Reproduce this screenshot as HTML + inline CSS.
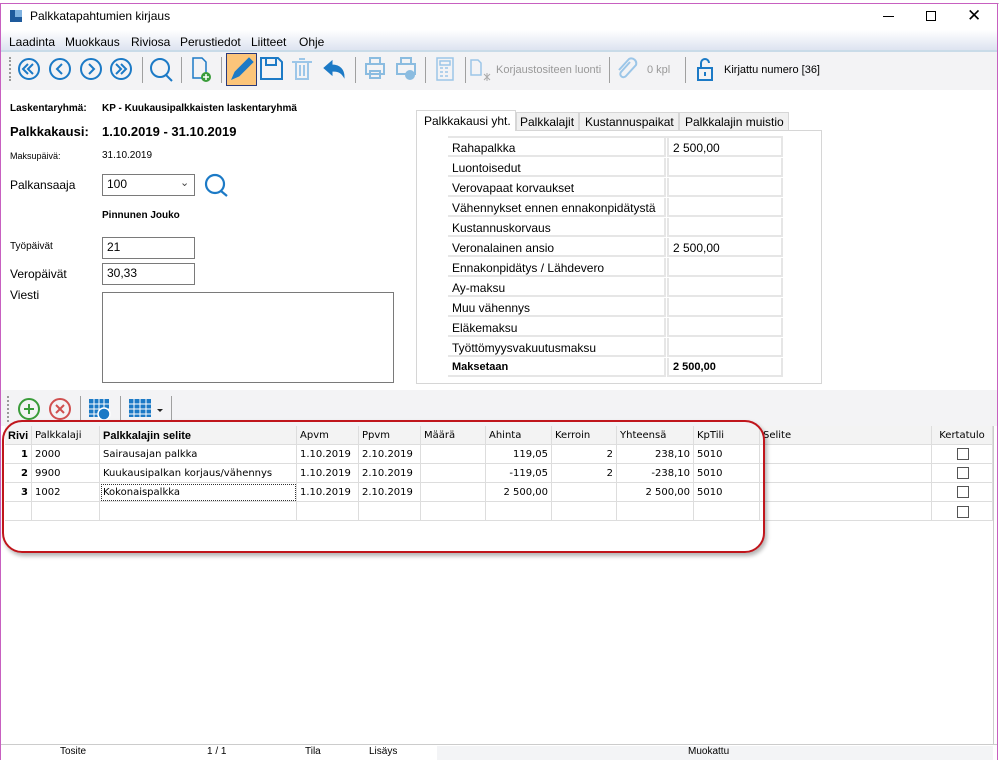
<!DOCTYPE html>
<html><head><meta charset="utf-8"><style>
*{box-sizing:border-box;margin:0;padding:0}
body{width:999px;height:760px;position:relative;overflow:hidden;background:#fff;font-family:"Liberation Sans",Arial,sans-serif;font-size:12px;color:#000}
.a{position:absolute}
.t{position:absolute;white-space:nowrap}
.ic{position:absolute}
.sep{position:absolute;width:1px;background:#a0a0a0}
.inp{position:absolute;border:1px solid #7a7a7a;background:#fff;font-size:12px;padding:2px 4px}
.rl{position:absolute;left:448px;width:218px;height:19px;border-bottom:2px solid #e6e6e6;border-right:2px solid #e6e6e6;padding:3px 4px;font-size:12px}
.rv{position:absolute;left:667px;width:116px;height:19px;border-bottom:2px solid #e6e6e6;border-right:2px solid #e6e6e6;border-left:2px solid #e6e6e6;padding:3px 4px;font-size:12px}
.c{position:absolute;border-right:1px solid #ddd;border-bottom:1px solid #ddd;font-family:"DejaVu Sans","Liberation Sans",sans-serif;font-size:10px;padding:4px 3px;white-space:nowrap;height:19px}
.r{text-align:right}
.cb{position:absolute;width:12px;height:12px;border:1px solid #555;background:#fff}
</style></head><body>
<div class="a" style="left:0;top:0;width:999px;height:4px;background:#fff;border-bottom:1px solid #ccc"></div>
<div class="a" style="left:0;top:3px;width:998px;height:757px;border:1px solid #c760c0;border-bottom:none"></div>
<!-- title -->
<div class="a" style="left:10px;top:10px;width:12px;height:12px;background:#1e5a9c"></div>
<div class="a" style="left:15px;top:10px;width:7px;height:7px;background:#7fb2e0"></div>
<div class="t" style="left:30px;top:9px;font-size:12px">Palkkatapahtumien kirjaus</div>
<div class="a" style="left:883px;top:16px;width:11px;height:1px;background:#000"></div>
<div class="a" style="left:926px;top:11px;width:10px;height:10px;border:1px solid #000"></div>
<div class="t" style="left:967px;top:6px;font-size:17px;font-weight:300">✕</div>
<!-- menu -->
<div class="a" style="left:1px;top:30px;width:996px;height:20px;background:linear-gradient(#fff,#dde3f0)"></div>
<div class="t" style="left:9px;top:35px">Laadinta</div>
<div class="t" style="left:65px;top:35px">Muokkaus</div>
<div class="t" style="left:131px;top:35px">Riviosa</div>
<div class="t" style="left:180px;top:35px">Perustiedot</div>
<div class="t" style="left:251px;top:35px">Liitteet</div>
<div class="t" style="left:299px;top:35px">Ohje</div>
<!-- toolbar -->
<div class="a" style="left:1px;top:50px;width:996px;height:40px;background:#f3f3f5;border-top:2px solid #c9dbe8"></div>
<div class="a" style="left:9px;top:57px;width:2px;height:24px;border-left:2px dotted #999"></div>
<svg class="ic" style="left:0;top:50px" width="999" height="40" fill="none" stroke="#1c7ac6" stroke-width="2">
<circle cx="29" cy="19" r="10"/><path d="M28 14l-5 5 5 5M33 14l-5 5 5 5"/>
<circle cx="60" cy="19" r="10"/><path d="M62 14l-5 5 5 5"/>
<circle cx="91" cy="19" r="10"/><path d="M89 14l5 5-5 5"/>
<circle cx="121" cy="19" r="10"/><path d="M116 14l5 5-5 5M121 14l5 5-5 5"/>
<circle cx="160" cy="18" r="9"/><path d="M166 25l6 6"/>
<path d="M193 8h9l4 4v16h-13z" stroke-width="1.5"/><circle cx="206" cy="27" r="5" fill="#3a9c3a" stroke="none"/><path d="M203 27h6M206 24v6" stroke="#fff" stroke-width="1.5"/>
</svg>
<div class="a" style="left:226px;top:53px;width:31px;height:33px;background:#fcc57a;border:1px solid #2a3a7a"></div>
<svg class="ic" style="left:0;top:50px" width="999" height="40" fill="none" stroke-width="2">
<path d="M232 29l3-7 14-14 4 4-14 14z" fill="#1c7ac6" stroke="#1c7ac6" stroke-width="1"/>
<path d="M261 8h17l4 4v17h-21z M266 8v7h10V8" stroke="#1c7ac6"/>
<path d="M292 12h20M296 12v17h12V12M299 9h6M300 15v11M304 15v11" stroke="#9cc6e8"/>
<path d="M324 18l8-7v4c8 0 12 5 12 12c-3-5-6-6-12-6v4z" fill="#1c7ac6" stroke="#1c7ac6" stroke-width="1"/>
<path d="M366 14h18v10h-18zM370 14V8h10v6M370 21h10v7h-10z" stroke="#8bbce0"/>
<path d="M397 14h18v10h-18zM401 14V8h10v6" stroke="#8bbce0"/><circle cx="410" cy="25" r="5" fill="#8bbce0" stroke="none"/>
<path d="M437 8h16v22h-16zM440 11h10v4h-10zM440 18h3M445 18h3M440 22h3M445 22h3M440 26h3M445 26h3" stroke="#9cc6e8" stroke-width="1.5"/>
<path d="M471 10h7l3 3v12h-10z" stroke="#9cc6e8" stroke-width="1.5"/><path d="M484 24l6 6M490 24l-6 6M487 23v8" stroke="#aaa" stroke-width="1"/>
<path d="M630 12l-9 10a3 3 0 0 0 5 4l10-11a5 5 0 0 0-7-6l-10 11" stroke="#9cc6e8" stroke-width="2"/>
<path d="M698 18h14v12h-14zM701 18v-5a4 4 0 0 1 8 0M705 22v4" stroke="#1c7ac6"/>
</svg>
<div class="sep" style="left:142px;top:57px;height:26px"></div>
<div class="sep" style="left:181px;top:57px;height:26px"></div>
<div class="sep" style="left:221px;top:57px;height:26px"></div>
<div class="sep" style="left:355px;top:57px;height:26px"></div>
<div class="sep" style="left:425px;top:57px;height:26px"></div>
<div class="sep" style="left:465px;top:57px;height:26px"></div>
<div class="sep" style="left:609px;top:57px;height:26px"></div>
<div class="sep" style="left:685px;top:57px;height:26px"></div>
<div class="t" style="left:496px;top:64px;font-size:11px;color:#999">Korjaustositeen luonti</div>
<div class="t" style="left:647px;top:64px;font-size:11px;color:#999">0 kpl</div>
<div class="t" style="left:724px;top:64px;font-size:11px">Kirjattu numero [36]</div>
<!-- left form -->
<div class="t" style="left:10px;top:103px;font-size:10px;font-weight:bold">Laskentaryhmä:</div>
<div class="t" style="left:102px;top:103px;font-size:10px;font-weight:bold">KP - Kuukausipalkkaisten laskentaryhmä</div>
<div class="t" style="left:10px;top:124px;font-size:13px;font-weight:bold">Palkkakausi:</div>
<div class="t" style="left:102px;top:124px;font-size:13px;font-weight:bold">1.10.2019 - 31.10.2019</div>
<div class="t" style="left:10px;top:151px;font-size:9px">Maksupäivä:</div>
<div class="t" style="left:102px;top:150px;font-size:10px">31.10.2019</div>
<div class="t" style="left:10px;top:178px;font-size:12px">Palkansaaja</div>
<div class="inp" style="left:102px;top:174px;width:93px;height:22px">100</div>
<div class="t" style="left:180px;top:176px;font-size:11px;color:#444">⌄</div>
<svg class="ic" style="left:203px;top:172px" width="27" height="27" fill="none" stroke="#1c7ac6" stroke-width="2.2"><circle cx="12" cy="12" r="9"/><path d="M18 19l6 5"/></svg>
<div class="t" style="left:102px;top:210px;font-size:10px;font-weight:bold">Pinnunen Jouko</div>
<div class="t" style="left:10px;top:241px;font-size:10px">Työpäivät</div>
<div class="inp" style="left:102px;top:237px;width:93px;height:22px">21</div>
<div class="t" style="left:10px;top:267px;font-size:12px">Veropäivät</div>
<div class="inp" style="left:102px;top:263px;width:93px;height:22px">30,33</div>
<div class="t" style="left:10px;top:288px;font-size:12px">Viesti</div>
<div class="inp" style="left:102px;top:292px;width:292px;height:91px"></div>
<!-- tabs -->
<div class="a" style="left:416px;top:130px;width:406px;height:254px;border:1px solid #d6d6d6"></div>
<div class="a" style="left:416px;top:110px;width:100px;height:21px;background:#fff;border:1px solid #d6d6d6;border-bottom:none"></div>
<div class="t" style="left:424px;top:114px;font-size:12px">Palkkakausi yht.</div>
<div class="a" style="left:516px;top:112px;width:63px;height:19px;background:#f0f0f0;border:1px solid #d6d6d6"></div>
<div class="t" style="left:520px;top:115px">Palkkalajit</div>
<div class="a" style="left:579px;top:112px;width:100px;height:19px;background:#f0f0f0;border:1px solid #d6d6d6"></div>
<div class="t" style="left:585px;top:115px">Kustannuspaikat</div>
<div class="a" style="left:679px;top:112px;width:110px;height:19px;background:#f0f0f0;border:1px solid #d6d6d6"></div>
<div class="t" style="left:685px;top:115px">Palkkalajin muistio</div>
<div class="a" style="left:448px;top:136px;width:335px;height:2px;background:#e6e6e6"></div>
<div class="rl" style="top:138px">Rahapalkka</div><div class="rv" style="top:138px">2 500,00</div>
<div class="rl" style="top:158px">Luontoisedut</div><div class="rv" style="top:158px"></div>
<div class="rl" style="top:178px">Verovapaat korvaukset</div><div class="rv" style="top:178px"></div>
<div class="rl" style="top:198px">Vähennykset ennen ennakonpidätystä</div><div class="rv" style="top:198px"></div>
<div class="rl" style="top:218px">Kustannuskorvaus</div><div class="rv" style="top:218px"></div>
<div class="rl" style="top:238px">Veronalainen ansio</div><div class="rv" style="top:238px">2 500,00</div>
<div class="rl" style="top:258px">Ennakonpidätys / Lähdevero</div><div class="rv" style="top:258px"></div>
<div class="rl" style="top:278px">Ay-maksu</div><div class="rv" style="top:278px"></div>
<div class="rl" style="top:298px">Muu vähennys</div><div class="rv" style="top:298px"></div>
<div class="rl" style="top:318px">Eläkemaksu</div><div class="rv" style="top:318px"></div>
<div class="rl" style="top:338px">Työttömyysvakuutusmaksu</div><div class="rv" style="top:338px"></div>
<div class="rl" style="top:358px;font-weight:bold;font-size:11px">Maksetaan</div><div class="rv" style="top:358px;font-weight:bold;font-size:11px">2 500,00</div>
<!-- lower toolbar -->
<div class="a" style="left:1px;top:390px;width:996px;height:36px;background:#f3f3f5"></div>
<div class="a" style="left:7px;top:396px;width:2px;height:26px;border-left:2px dotted #999"></div>
<svg class="ic" style="left:0;top:390px" width="200" height="36" fill="none" stroke-width="2">
<circle cx="29" cy="19" r="10" stroke="#3a9c3a"/><path d="M24 19h10M29 14v10" stroke="#3a9c3a"/>
<circle cx="60" cy="19" r="10" stroke="#d05050"/><path d="M56 15l8 8M64 15l-8 8" stroke="#d05050"/>
<rect x="89" y="9" width="20" height="18" fill="#1c7ac6" stroke="none"/><path d="M89 14h20M89 19h20M89 24h20M94 9v18M99 9v18M104 9v18" stroke="#fff" stroke-width="1"/><circle cx="104" cy="24" r="6" fill="#1c7ac6" stroke="#fff" stroke-width="1.5"/>
<rect x="129" y="9" width="22" height="18" fill="#1c7ac6" stroke="none"/><path d="M129 14h22M129 19h22M129 24h22M134 9v18M140 9v18M146 9v18" stroke="#fff" stroke-width="1"/>
<path d="M157 19l3 3 3-3z" fill="#222" stroke="none"/>
</svg>
<div class="sep" style="left:80px;top:396px;height:26px"></div>
<div class="sep" style="left:120px;top:396px;height:26px"></div>
<div class="sep" style="left:171px;top:396px;height:26px"></div>
<!-- grid -->
<div class="a" style="left:5px;top:426px;width:988px;height:19px;background:#f3f3f3"></div>
<div class="c" style="left:5px;top:426px;width:27px;font-weight:bold;font-size:11px;font-family:'Liberation Sans',sans-serif">Rivi</div>
<div class="c" style="left:32px;top:426px;width:68px">Palkkalaji</div>
<div class="c" style="left:100px;top:426px;width:197px;font-weight:bold;font-size:11px;font-family:'Liberation Sans',sans-serif">Palkkalajin selite</div>
<div class="c" style="left:297px;top:426px;width:62px">Apvm</div>
<div class="c" style="left:359px;top:426px;width:62px">Ppvm</div>
<div class="c" style="left:421px;top:426px;width:65px">Määrä</div>
<div class="c" style="left:486px;top:426px;width:66px">Ahinta</div>
<div class="c" style="left:552px;top:426px;width:65px">Kerroin</div>
<div class="c" style="left:617px;top:426px;width:77px">Yhteensä</div>
<div class="c" style="left:694px;top:426px;width:66px">KpTili</div>
<div class="c" style="left:760px;top:426px;width:172px">Selite</div>
<div class="c" style="left:932px;top:426px;width:61px;text-align:center">Kertatulo</div>

<div class="c r" style="left:5px;top:445px;width:27px;font-weight:bold">1</div>
<div class="c" style="left:32px;top:445px;width:68px">2000</div>
<div class="c" style="left:100px;top:445px;width:197px">Sairausajan palkka</div>
<div class="c" style="left:297px;top:445px;width:62px">1.10.2019</div>
<div class="c" style="left:359px;top:445px;width:62px">2.10.2019</div>
<div class="c" style="left:421px;top:445px;width:65px"></div>
<div class="c r" style="left:486px;top:445px;width:66px">119,05</div>
<div class="c r" style="left:552px;top:445px;width:65px">2</div>
<div class="c r" style="left:617px;top:445px;width:77px">238,10</div>
<div class="c" style="left:694px;top:445px;width:66px">5010</div>
<div class="c" style="left:760px;top:445px;width:172px"></div>
<div class="c" style="left:932px;top:445px;width:61px"></div>

<div class="c r" style="left:5px;top:464px;width:27px;font-weight:bold">2</div>
<div class="c" style="left:32px;top:464px;width:68px">9900</div>
<div class="c" style="left:100px;top:464px;width:197px">Kuukausipalkan korjaus/vähennys</div>
<div class="c" style="left:297px;top:464px;width:62px">1.10.2019</div>
<div class="c" style="left:359px;top:464px;width:62px">2.10.2019</div>
<div class="c" style="left:421px;top:464px;width:65px"></div>
<div class="c r" style="left:486px;top:464px;width:66px">-119,05</div>
<div class="c r" style="left:552px;top:464px;width:65px">2</div>
<div class="c r" style="left:617px;top:464px;width:77px">-238,10</div>
<div class="c" style="left:694px;top:464px;width:66px">5010</div>
<div class="c" style="left:760px;top:464px;width:172px"></div>
<div class="c" style="left:932px;top:464px;width:61px"></div>

<div class="c r" style="left:5px;top:483px;width:27px;font-weight:bold">3</div>
<div class="c" style="left:32px;top:483px;width:68px">1002</div>
<div class="c" style="left:100px;top:483px;width:197px;outline:1px dotted #333;outline-offset:-2px">Kokonaispalkka</div>
<div class="c" style="left:297px;top:483px;width:62px">1.10.2019</div>
<div class="c" style="left:359px;top:483px;width:62px">2.10.2019</div>
<div class="c" style="left:421px;top:483px;width:65px"></div>
<div class="c r" style="left:486px;top:483px;width:66px">2 500,00</div>
<div class="c" style="left:552px;top:483px;width:65px"></div>
<div class="c r" style="left:617px;top:483px;width:77px">2 500,00</div>
<div class="c" style="left:694px;top:483px;width:66px">5010</div>
<div class="c" style="left:760px;top:483px;width:172px"></div>
<div class="c" style="left:932px;top:483px;width:61px"></div>

<div class="c" style="left:5px;top:502px;width:27px"></div>
<div class="c" style="left:32px;top:502px;width:68px"></div>
<div class="c" style="left:100px;top:502px;width:197px"></div>
<div class="c" style="left:297px;top:502px;width:62px"></div>
<div class="c" style="left:359px;top:502px;width:62px"></div>
<div class="c" style="left:421px;top:502px;width:65px"></div>
<div class="c" style="left:486px;top:502px;width:66px"></div>
<div class="c" style="left:552px;top:502px;width:65px"></div>
<div class="c" style="left:617px;top:502px;width:77px"></div>
<div class="c" style="left:694px;top:502px;width:66px"></div>
<div class="c" style="left:760px;top:502px;width:172px"></div>
<div class="c" style="left:932px;top:502px;width:61px"></div>
<div class="cb" style="left:957px;top:448px"></div>
<div class="cb" style="left:957px;top:467px"></div>
<div class="cb" style="left:957px;top:486px"></div>
<div class="cb" style="left:957px;top:506px"></div>
<div class="a" style="left:993px;top:426px;width:1px;height:318px;background:#ccc"></div>
<!-- red highlight -->
<div class="a" style="left:2px;top:420px;width:763px;height:133px;border:2px solid #c0161c;border-radius:20px;box-shadow:2px 3px 4px rgba(0,0,0,.3)"></div>
<!-- status -->
<div class="a" style="left:1px;top:744px;width:996px;height:16px;border-top:1px solid #ccc;background:#fff"></div>
<div class="a" style="left:437px;top:746px;width:556px;height:14px;background:#f3f4f6"></div>
<div class="t" style="left:60px;top:746px;font-size:10px">Tosite</div>
<div class="t" style="left:207px;top:746px;font-size:10px">1 / 1</div>
<div class="t" style="left:305px;top:746px;font-size:10px">Tila</div>
<div class="t" style="left:369px;top:746px;font-size:10px">Lisäys</div>
<div class="t" style="left:688px;top:746px;font-size:10px">Muokattu</div>
</body></html>
